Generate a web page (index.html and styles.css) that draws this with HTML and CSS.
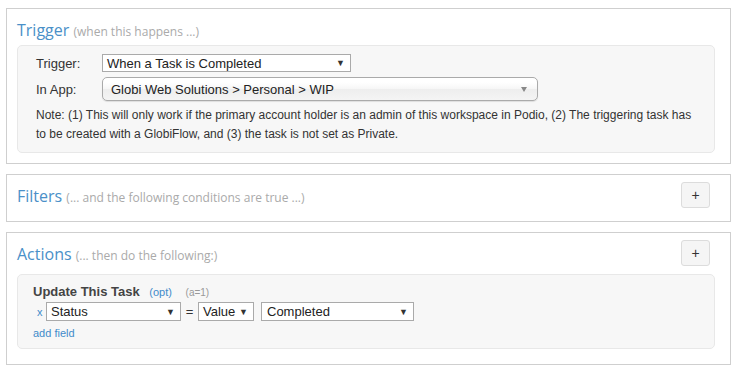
FILE: index.html
```html
<!DOCTYPE html>
<html lang="en">
<head>
    <meta charset="UTF-8">
    <title>Flow Editor</title>
    <link rel="stylesheet" href="styles.css">
</head>
<body>
    <div class="panel panel-trigger">
        <div class="panel-head">
            <h2 class="panel-title">Trigger <span class="panel-sub">(when this happens ...)</span></h2>
        </div>
        <div class="well well-trigger">
            <div class="form-row">
                <label class="form-label">Trigger:</label>
                <div class="select select-trigger">
                    <span>When a Task is Completed</span>
                    <span class="caret">&#9660;</span>
                </div>
            </div>
            <div class="form-row">
                <label class="form-label">In App:</label>
                <div class="chosen">
                    <span>Globi Web Solutions &gt; Personal &gt; WIP</span>
                    <span class="chosen-caret"></span>
                </div>
            </div>
            <p class="note">Note: (1) This will only work if the primary account holder is an admin of this workspace in Podio, (2) The triggering task has to be created with a GlobiFlow, and (3) the task is not set as Private.</p>
        </div>
    </div>

    <div class="panel panel-filters">
        <div class="panel-head">
            <h2 class="panel-title">Filters <span class="panel-sub">(... and the following conditions are true ...)</span></h2>
            <button class="add-btn">+</button>
        </div>
    </div>

    <div class="panel panel-actions">
        <div class="panel-head">
            <h2 class="panel-title">Actions <span class="panel-sub">(... then do the following:)</span></h2>
            <button class="add-btn">+</button>
        </div>
        <div class="well well-action">
            <div class="action-title">
                Update This Task
                <a href="#" class="opt-link">(opt)</a>
                <span class="action-id">(a=1)</span>
            </div>
            <div class="field-row">
                <a href="#" class="remove-link">x</a>
                <div class="select select-field">
                    <span>Status</span>
                    <span class="caret">&#9660;</span>
                </div>
                <span class="equals">=</span>
                <div class="select select-type">
                    <span>Value</span>
                    <span class="caret">&#9660;</span>
                </div>
                <div class="select select-value">
                    <span>Completed</span>
                    <span class="caret">&#9660;</span>
                </div>
            </div>
            <a href="#" class="add-field">add field</a>
        </div>
    </div>
</body>
</html>
```

FILE: styles.css
```css
* {
    margin: 0;
    padding: 0;
    box-sizing: border-box;
}

body {
    padding: 8px 11px 0 6px;
    font-family: 'Liberation Sans', Arial, sans-serif;
    font-size: 13px;
    color: #333;
    background: #fff;
}

.panel {
    border: 1px solid #cfcfcf;
    padding: 7px 15px 10px 10px;
    margin-bottom: 10px;
}

.panel-filters {
    padding-bottom: 13px;
}

.panel-actions {
    padding-bottom: 15px;
}

.panel-head {
    display: flex;
    justify-content: space-between;
    align-items: flex-start;
    height: 26px;
}

.panel-title {
    margin-top: 3px;
    font-family: 'Open Sans', sans-serif;
    font-weight: 400;
    font-size: 16px;
    line-height: 22px;
    color: #4a90c8;
}

.panel-sub {
    font-size: 12px;
    line-height: 1;
    color: #aaa;
}

.add-btn {
    width: 29px;
    height: 26px;
    margin-right: 5px;
    background: #f5f5f5;
    border: 1px solid #dcdcdc;
    border-radius: 3px;
    font-family: 'Liberation Sans', Arial, sans-serif;
    font-size: 14px;
    color: #333;
    cursor: pointer;
}

.well {
    background: #f7f7f7;
    border: 1px solid #e8e8e8;
    border-radius: 5px;
}

.well-trigger {
    margin-top: 3px;
    padding: 8px 18px 8px;
}

.well-action {
    margin-top: 8px;
    padding: 8px 15px 7px;
}

.form-row {
    display: flex;
    align-items: center;
    margin-bottom: 5px;
}

.form-label {
    width: 66px;
}

.select {
    display: flex;
    justify-content: space-between;
    align-items: center;
    height: 18px;
    padding: 0 5px 0 4px;
    background: #fff;
    border: 1px solid #aaa;
    color: #222;
}

.caret {
    font-size: 9px;
    color: #333;
}

.select-trigger {
    width: 249px;
}

.chosen {
    display: flex;
    justify-content: space-between;
    align-items: center;
    width: 436px;
    height: 24px;
    padding: 0 10px 0 8px;
    border: 1px solid #aaa;
    border-radius: 5px;
    background: linear-gradient(#fff 20%, #f6f6f6 50%, #eee 52%, #f4f4f4 100%);
    box-shadow: 0 1px 1px rgba(0,0,0,0.1);
    color: #222;
}

.chosen-caret {
    width: 0;
    height: 0;
    border-left: 3px solid transparent;
    border-right: 3px solid transparent;
    border-top: 5px solid #888;
}

.note {
    font-size: 12px;
    line-height: 19px;
    color: #333;
}

.action-title {
    font-weight: bold;
    line-height: 18px;
    color: #444;
}

.opt-link {
    margin-left: 6px;
    font-weight: normal;
    font-size: 11px;
    color: #428bca;
    text-decoration: none;
}

.action-id {
    margin-left: 10px;
    font-weight: normal;
    font-size: 10px;
    color: #999;
}

.field-row {
    display: flex;
    align-items: center;
    margin-bottom: 4px;
}

.remove-link {
    width: 13px;
    padding-left: 4px;
    font-size: 11px;
    color: #428bca;
    text-decoration: none;
}

.select-field {
    width: 135px;
    height: 19px;
}

.equals {
    width: 17px;
    text-align: center;
}

.select-type {
    width: 56px;
    height: 19px;
}

.select-value {
    width: 153px;
    height: 19px;
    margin-left: 7px;
    padding-left: 5px;
}

.add-field {
    display: block;
    font-size: 11px;
    line-height: 16px;
    color: #428bca;
    text-decoration: none;
}
```
